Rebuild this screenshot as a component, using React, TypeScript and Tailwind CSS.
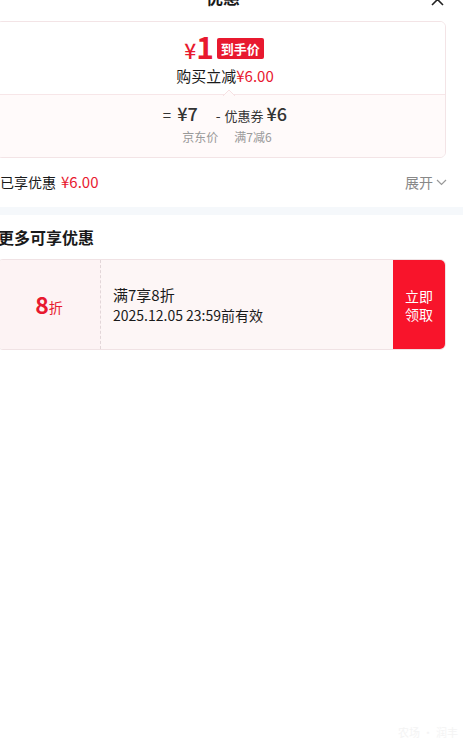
import React from "react";

export default function App() {
  const font = { fontFamily: '"Noto Sans CJK SC", "Noto Sans", sans-serif' };
  return (
    <div className="w-[463px] h-[747px] bg-white overflow-hidden relative" style={font}>
      {/* header */}
      <div className="relative h-[21px] overflow-visible">
        <div className="absolute left-0 w-[446px] top-[-14px] text-center text-[17px] font-bold text-[#1a1a1a] leading-[22px]">优惠</div>
        <svg className="absolute left-[430px] top-[-8px]" width="15" height="15" viewBox="0 0 15 15">
          <path d="M2 2 L13 13 M13 2 L2 13" stroke="#222" strokeWidth="1.6" fill="none" />
        </svg>
      </div>
      {/* price card */}
      <div className="ml-[-4px] w-[450px] h-[137px] border border-[#f3e4e6] rounded-[6px] overflow-hidden flex flex-col">
        <div className="h-[72px] flex flex-col items-center pt-[11px] bg-white relative">
          <div className="flex items-center pl-[6px] h-[30px]">
            <span className="text-[#e8192f] font-bold flex items-baseline leading-[30px]">
              <span className="text-[21px] font-medium">¥</span>
              <span className="text-[30px]">1</span>
            </span>
            <span className="ml-[3px] bg-[#e8192f] text-white text-[13px] font-bold leading-[21px] px-[4px] rounded-[2px]">到手价</span>
          </div>
          <div className="mt-[3px] text-[15px] leading-[20px] text-[#1a1a1a] pl-[8px]">
            购买立减<span className="text-[#e8192f]">¥6.00</span>
          </div>
          <div className="absolute bottom-[-1px] left-[226px] w-[10px] h-[6px]">
            <svg width="12" height="7" viewBox="0 0 12 7">
              <path d="M0 7 L6 1 L12 7" fill="#fffafa" stroke="#f7e1e3" strokeWidth="1" />
            </svg>
          </div>
        </div>
        <div className="flex-1 bg-[#fffafa] border-t border-[#f7e6e8] flex flex-col items-center pt-[5px]">
          <div className="flex items-baseline text-[#333] pl-[8px]">
            <span className="text-[15px] mr-[6px]">=</span>
            <span className="text-[18px] font-medium">¥7</span>
            <span className="ml-[18px] text-[14px]">-</span>
            <span className="ml-[4px] text-[13px]">优惠券</span>
            <span className="ml-[3px] text-[18px] font-medium">¥6</span>
          </div>
          <div className="flex text-[12px] text-[#999] leading-[16px] mt-[2px] pl-[12px]">
            <span>京东价</span>
            <span className="ml-[16px]">满7减6</span>
          </div>
        </div>
      </div>
      {/* saved row */}
      <div className="h-[49px] flex items-center justify-between pr-[16px]">
        <div className="text-[14px] text-[#1a1a1a] flex items-center">
          已享优惠<span className="ml-[5px] text-[15px] text-[#e8192f]">¥6.00</span>
        </div>
        <div className="flex items-center text-[14px] text-[#888]">
          展开
          <svg className="ml-[3px]" width="11" height="7" viewBox="0 0 11 7">
            <path d="M1 1 L5.5 5.5 L10 1" stroke="#999" strokeWidth="1.2" fill="none" />
          </svg>
        </div>
      </div>
      <div className="h-[8px] bg-[#f5f8fb]" />
      {/* more */}
      <div className="h-[44px] flex items-center ml-[-2px]">
        <span className="text-[16px] font-bold text-[#1a1a1a]">更多可享优惠</span>
      </div>
      <div className="ml-[-3px] w-[449px] h-[91px] flex rounded-[6px] border border-[#f0e2e4] overflow-hidden">
        <div className="w-[103px] bg-[#fdf3f4] border-r border-dashed border-[#e2d6d8] flex items-center justify-center">
          <span className="text-[#e8192f] font-bold text-[23px] leading-none">8</span>
          <span className="text-[#e8192f] text-[14px] leading-none mt-[4px]">折</span>
        </div>
        <div className="flex-1 bg-[#fdf6f6] flex flex-col justify-center pl-[12px] text-[#1a1a1a]">
          <div className="text-[15px] leading-[20px]">满7享8折</div>
          <div className="text-[14px] leading-[20px]">2025.12.05 23:59前有效</div>
        </div>
        <div className="w-[52px] bg-[#f8142b] flex flex-col items-center justify-center text-white text-[14px] leading-[18px]">
          <span>立即</span>
          <span>领取</span>
        </div>
      </div>
      <div className="absolute left-[398px] top-[724px] text-[11px] text-[#f4f4f4]">农场 · 润丰</div>
    </div>
  );
}
